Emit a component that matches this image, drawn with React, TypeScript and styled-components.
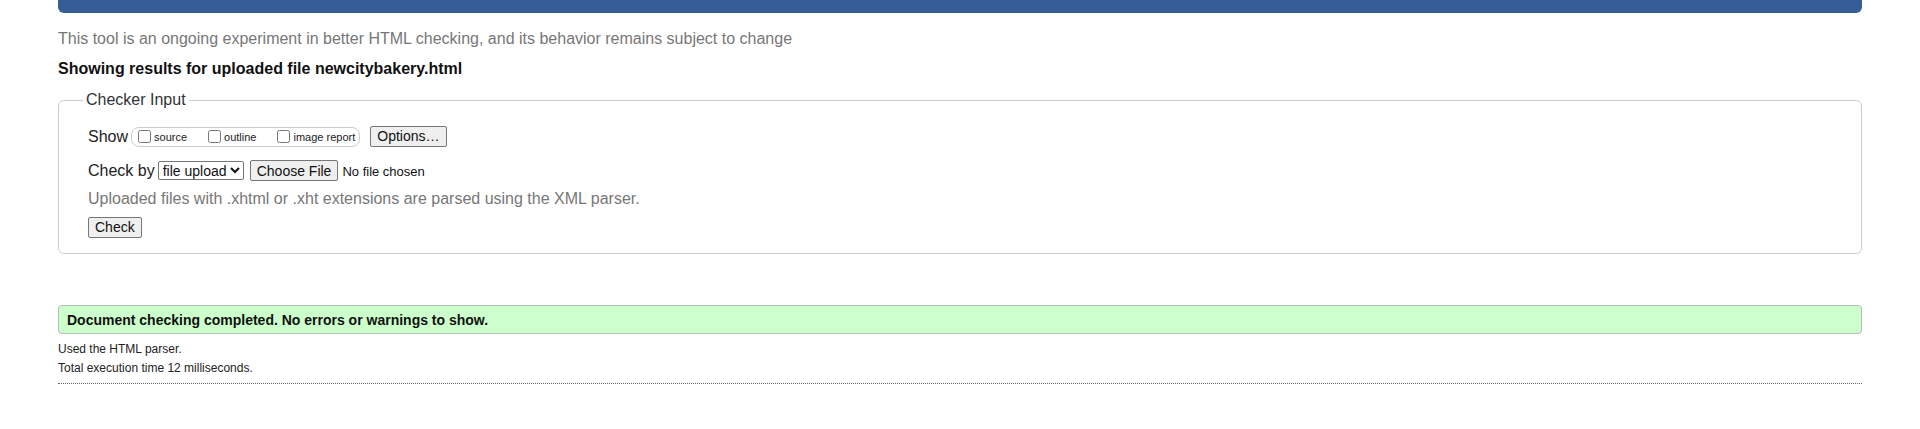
import React from "react";
import styled, { createGlobalStyle } from "styled-components";

const Global = createGlobalStyle`
  html, body { margin: 0; padding: 0; background: #fff; }
  body {
    font-family: "Liberation Sans", Arial, sans-serif;
    color: #222;
  }
`;

const Page = styled.div`
  padding: 0 58px;
`;

const HeaderBar = styled.div`
  height: 13px;
  background: #365d95;
  border-radius: 0 0 6px 6px;
`;

const About = styled.p`
  margin: 17px 0 0;
  font-size: 16px;
  line-height: 18px;
  color: #777;
`;

const ResultsTitle = styled.h2`
  margin: 12px 0 0;
  font-size: 16px;
  line-height: 18px;
  font-weight: bold;
  color: #111;
`;

const Fieldset = styled.fieldset`
  margin: 13px 0 0;
  padding: 0 29px 15px;
  border: 1px solid #ccc;
  border-radius: 6px;
  min-width: 0;
`;

const Legend = styled.legend`
  margin-left: -5px;
  padding: 0 3px;
  font-size: 16px;
  line-height: 18px;
  color: #333;
`;

const Row = styled.div<{ $top: number }>`
  display: flex;
  align-items: center;
  margin-top: ${(p) => p.$top}px;
  font-size: 16px;
  color: #222;
`;

const RowLabel = styled.span`
  margin-right: 3px;
`;

const Group = styled.span`
  display: inline-flex;
  align-items: center;
  height: 18px;
  padding: 0 4px 0 5px;
  border: 1px solid #ccc;
  border-radius: 8px;
  margin-right: 10px;
`;

const Opt = styled.label<{ $gap: number }>`
  display: inline-flex;
  align-items: center;
  font-size: 11px;
  margin-right: ${(p) => p.$gap}px;
  color: #222;
`;

const Box = styled.input`
  margin: 0 3px 0 1px;
  width: 13px;
  height: 13px;
`;

const NativeButton = styled.button`
  font-family: "Liberation Sans", Arial, sans-serif;
  font-size: 14px;
  color: #111;
  background: #efefef;
  border: 1px solid #767676;
  border-radius: 2px;
  padding: 1px 6px;
  height: 21px;
  line-height: 17px;
`;

const Select = styled.select`
  font-family: "Liberation Sans", Arial, sans-serif;
  font-size: 14px;
  height: 19px;
  padding: 0;
  border: 1px solid #767676;
  border-radius: 2px;
  background: #fff;
  color: #111;
  margin-right: 6px;
`;

const FileInput = styled.input`
  font-family: "Liberation Sans", Arial, sans-serif;
  font-size: 13px;
  color: #111;
  &::file-selector-button {
    font-family: "Liberation Sans", Arial, sans-serif;
    font-size: 14px;
    background: #efefef;
    border: 1px solid #767676;
    border-radius: 2px;
    padding: 1px 6px;
    height: 21px;
    margin-right: 4px;
    color: #111;
  }
`;

const Hint = styled.p`
  margin: 9px 0 0;
  font-size: 16px;
  line-height: 18px;
  color: #777;
`;

const Success = styled.div`
  margin-top: 51px;
  background: #ccffcc;
  border: 1px solid #bbb;
  border-radius: 4px;
  padding: 0 8px;
  height: 27px;
  display: flex;
  align-items: center;
  font-size: 14px;
  font-weight: bold;
  color: #111;
`;

const Details = styled.div`
  padding-bottom: 8px;
  border-bottom: 1px dotted #666;
`;

const Detail = styled.p<{ $top: number }>`
  margin: ${(p) => p.$top}px 0 0;
  font-size: 12px;
  line-height: 14px;
  color: #222;
`;

export default function App() {
  return (
    <>
      <Global />
      <Page>
        <HeaderBar />
        <About>
          This tool is an ongoing experiment in better HTML checking, and its behavior remains subject to change
        </About>
        <ResultsTitle>Showing results for uploaded file newcitybakery.html</ResultsTitle>
        <Fieldset>
          <Legend>Checker Input</Legend>
          <Row $top={17}>
            <RowLabel>Show</RowLabel>
            <Group>
              <Opt $gap={20}>
                <Box type="checkbox" />
                source
              </Opt>
              <Opt $gap={20}>
                <Box type="checkbox" />
                outline
              </Opt>
              <Opt $gap={0}>
                <Box type="checkbox" />
                image report
              </Opt>
            </Group>
            <NativeButton type="button">Options…</NativeButton>
          </Row>
          <Row $top={13}>
            <RowLabel>Check by</RowLabel>
            <Select defaultValue="upload">
              <option value="upload">file upload</option>
              <option value="address">address</option>
              <option value="text">text input</option>
            </Select>
            <FileInput type="file" />
          </Row>
          <Hint>Uploaded files with .xhtml or .xht extensions are parsed using the XML parser.</Hint>
          <Row $top={9}>
            <NativeButton type="button">Check</NativeButton>
          </Row>
        </Fieldset>
        <Success>Document checking completed. No errors or warnings to show.</Success>
        <Details>
          <Detail $top={8}>Used the HTML parser.</Detail>
          <Detail $top={5}>Total execution time 12 milliseconds.</Detail>
        </Details>
      </Page>
    </>
  );
}
